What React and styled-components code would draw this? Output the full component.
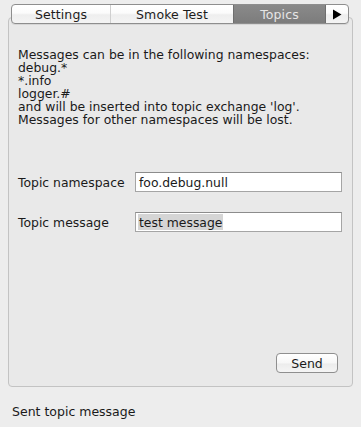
import React from 'react';
import styled, { createGlobalStyle } from 'styled-components';

const GlobalStyle = createGlobalStyle`
  html, body {
    margin: 0;
    padding: 0;
    background: #ededed;
  }
  body {
    font-family: 'DejaVu Sans', 'Noto Sans', sans-serif;
    font-size: 12.4px;
    color: #1a1a1a;
  }
`;

const Window = styled.div`
  width: 361px;
  height: 427px;
  box-sizing: border-box;
  padding: 4px 8px 0;
  display: flex;
  flex-direction: column;
`;

const TabBar = styled.div`
  position: relative;
  z-index: 1;
  margin: 0 4px 0 3px;
  height: 20px;
  box-sizing: border-box;
  display: flex;
  border: 1px solid #8e8e8e;
  border-radius: 4px;
  overflow: hidden;
  background: linear-gradient(#ffffff, #fbfbfb 45%, #eeeeee 55%, #f4f4f4);
  box-shadow: 0 1px 0 rgba(0, 0, 0, 0.08);
`;

const Tab = styled.div`
  flex: 0 0 ${({ width }) => width}px;
  display: flex;
  align-items: center;
  justify-content: center;
  font-size: 12.5px;
  letter-spacing: 0.1px;
  color: ${({ active }) => (active ? '#e6e6e6' : '#1c1c1c')};
  background: ${({ active }) =>
    active ? 'linear-gradient(#8a8a8a, #7c7c7c)' : 'transparent'};
  border-left: ${({ divider, active }) =>
    active ? '1px solid #6f6f6f' : divider ? '1px solid #cfcfcf' : 'none'};
  box-sizing: border-box;
`;

const ArrowTab = styled.div`
  flex: 1;
  display: flex;
  align-items: center;
  justify-content: center;
  border-left: 1px solid #6f6f6f;
`;

const Panel = styled.div`
  margin-top: -7px;
  height: 370px;
  box-sizing: border-box;
  border: 1px solid #c3c3c3;
  border-radius: 4px;
  background: #e9e9e9;
  padding: 30px 10px 13px 9px;
  display: flex;
  flex-direction: column;
`;

const Info = styled.div`
  display: flex;
  flex-direction: column;
`;

const InfoLine = styled.div`
  height: 13px;
  line-height: 13px;
  white-space: nowrap;
`;

const Form = styled.div`
  margin-top: 46px;
  display: flex;
  flex-direction: column;
  gap: 20px;
`;

const Row = styled.div`
  display: flex;
  align-items: center;
`;

const Label = styled.span`
  flex: 0 0 117px;
`;

const Field = styled.div`
  flex: 0 0 207px;
  height: 20px;
  box-sizing: border-box;
  border: 1px solid #a5a5a5;
  border-top-color: #8c8c8c;
  background: #ffffff;
  display: flex;
  align-items: stretch;
  padding: 1px 2px;
`;

const FieldText = styled.span`
  display: flex;
  align-items: center;
  padding: 0 1px;
  background: ${({ selected }) => (selected ? '#d5d5d5' : 'transparent')};
`;

const Actions = styled.div`
  margin-top: auto;
  padding-right: 4px;
  display: flex;
  justify-content: flex-end;
`;

const Button = styled.button`
  width: 62px;
  height: 20px;
  box-sizing: border-box;
  border: 1px solid #8f8f8f;
  border-radius: 4px;
  background: linear-gradient(#ffffff, #f7f7f7 50%, #ececec 55%, #f5f5f5);
  font-family: inherit;
  font-size: 12.5px;
  color: #1a1a1a;
  padding: 0;
`;

const Status = styled.div`
  margin-top: 17px;
  padding-left: 4px;
  font-size: 12.5px;
`;

const infoLines = [
  'Messages can be in the following namespaces:',
  'debug.*',
  '*.info',
  'logger.#',
  "and will be inserted into topic exchange 'log'.",
  'Messages for other namespaces will be lost.',
];

export default function App() {
  return (
    <>
      <GlobalStyle />
      <Window>
        <TabBar>
          <Tab width={98}>Settings</Tab>
          <Tab width={123} divider>
            Smoke Test
          </Tab>
          <Tab width={92} active>
            Topics
          </Tab>
          <ArrowTab>
            <svg width="10" height="11" viewBox="0 0 10 11">
              <polygon points="1,0.5 9.5,5.5 1,10.5" fill="#000" />
            </svg>
          </ArrowTab>
        </TabBar>
        <Panel>
          <Info>
            {infoLines.map((line) => (
              <InfoLine key={line}>{line}</InfoLine>
            ))}
          </Info>
          <Form>
            <Row>
              <Label>Topic namespace</Label>
              <Field>
                <FieldText>foo.debug.null</FieldText>
              </Field>
            </Row>
            <Row>
              <Label>Topic message</Label>
              <Field>
                <FieldText selected>test message</FieldText>
              </Field>
            </Row>
          </Form>
          <Actions>
            <Button>Send</Button>
          </Actions>
        </Panel>
        <Status>Sent topic message</Status>
      </Window>
    </>
  );
}
